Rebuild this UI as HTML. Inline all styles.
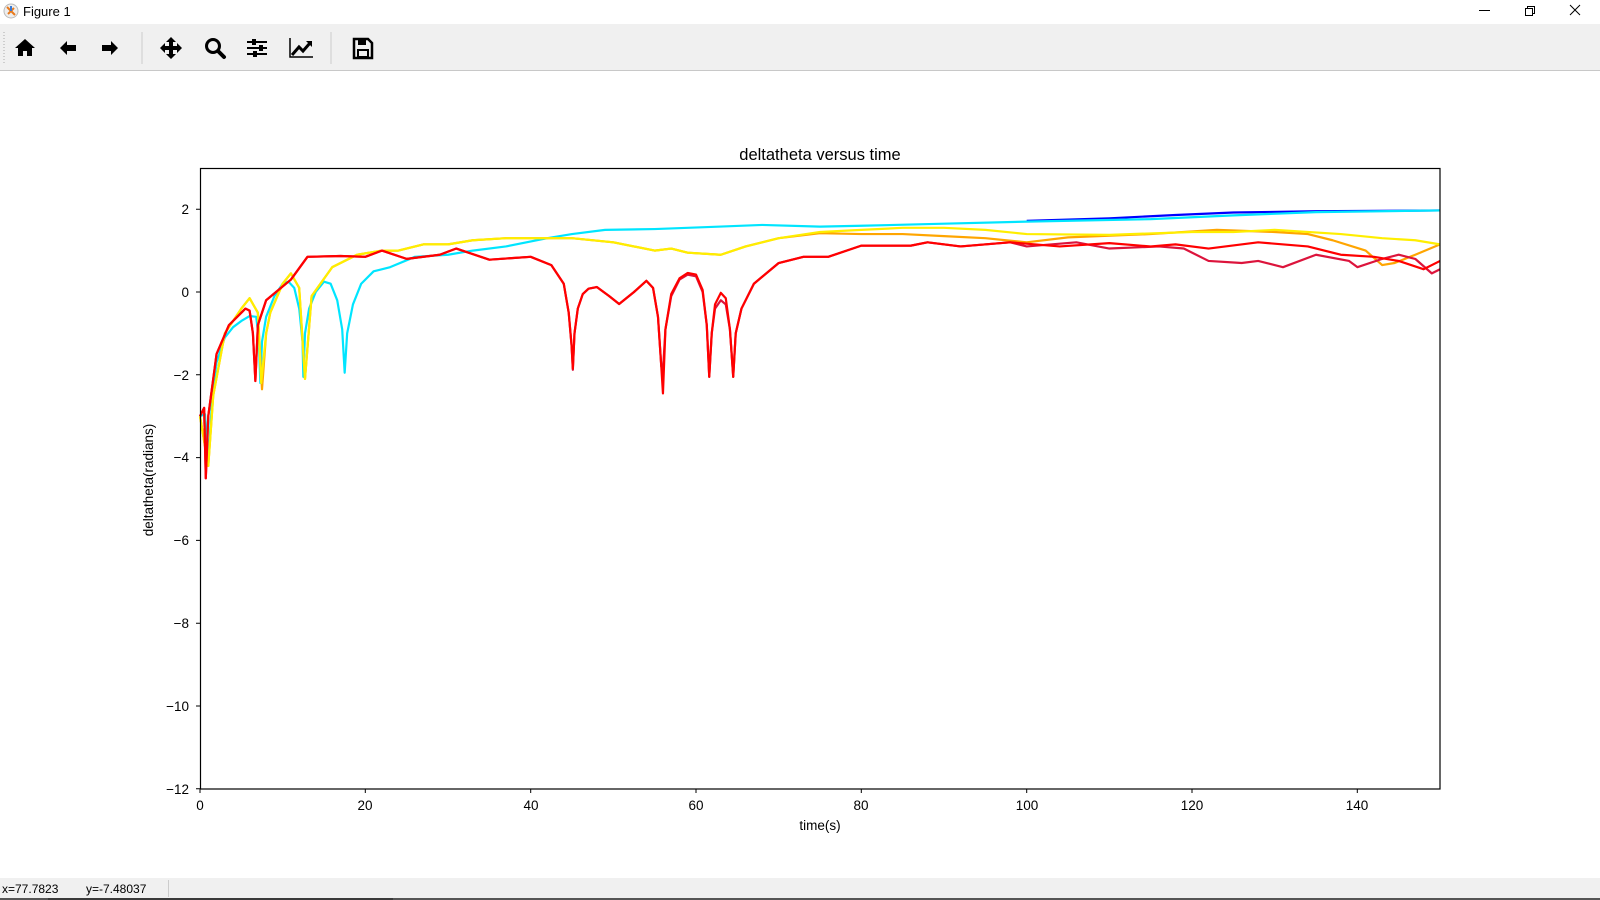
<!DOCTYPE html>
<html><head><meta charset="utf-8"><style>
body{margin:0;width:1600px;height:900px;overflow:hidden;background:#fff;font-family:"Liberation Sans","DejaVu Sans",sans-serif;position:relative}
.tb{position:absolute;left:0;top:24px;width:1600px;height:46px;background:#f0f0f0;border-bottom:1px solid #c8c8c8}
.sb{position:absolute;left:0;top:878px;width:1600px;height:20px;background:#f0f0f0;font-size:12px}
</style></head><body>
<div style="position:absolute;left:0;top:0;width:1600px;height:24px;background:#fff">
<svg width="16" height="16" style="position:absolute;left:3px;top:3px" viewBox="0 0 16 16"><circle cx="8" cy="8" r="7" fill="#eee" stroke="#bbb"/><path d="M4 4L12 12M5 11L11 5" stroke="#e87a1e" stroke-width="2"/><path d="M8 3V8" stroke="#3a7bd5" stroke-width="2"/></svg>
<div style="position:absolute;left:23px;top:4px;font-size:13px;color:#000">Figure 1</div>
<svg width="160" height="24" style="position:absolute;left:1440px;top:0" viewBox="0 0 160 24"><path d="M39 10.5H50" stroke="#000"/><rect x="85.5" y="8.5" width="7" height="7" fill="none" stroke="#000"/><path d="M87.5 8.5V6.5H94.5V13.5H92.5" fill="none" stroke="#000"/><path d="M130 5L140 15M140 5L130 15" stroke="#000"/></svg>
</div>
<div class="tb">
<svg width="420" height="46" viewBox="0 0 420 46" style="position:absolute;left:0;top:0">
<path d="M4 8V40" stroke="#aaa" stroke-dasharray="1 2"/>
<path d="M25 15L15 24H18V32H23V27H27V32H32V24H35Z" fill="#000"/>
<path d="M60 24L67 17V21H76V27H67V31Z" fill="#000"/>
<path d="M118 24L111 17V21H102V27H111V31Z" fill="#000"/>
<path d="M142 8V40" stroke="#ccc"/>
<path d="M171 13L176 18H173V22H177V19L182 24L177 29V26H173V30H176L171 35L166 30H169V26H165V29L160 24L165 19V22H169V18H166Z" fill="#000"/>
<circle cx="213" cy="22" r="6.5" fill="none" stroke="#000" stroke-width="3"/><path d="M218 27L224 33" stroke="#000" stroke-width="4" stroke-linecap="round"/>
<path d="M247 18H267M247 24H267M247 30H267" stroke="#000" stroke-width="2"/><rect x="252" y="15" width="4" height="6" fill="#000"/><rect x="259" y="21" width="4" height="6" fill="#000"/><rect x="253" y="27" width="4" height="6" fill="#000"/>
<path d="M290 14V33H313" stroke="#000" stroke-width="1.5" fill="none"/><path d="M292 31L299 23L303 27L310 19" stroke="#000" stroke-width="3" fill="none"/><path d="M306 17H312V23Z" fill="#000"/>
<path d="M331 8V40" stroke="#ccc"/>
<path d="M354 15H368L372 19V34H354Z" fill="none" stroke="#000" stroke-width="2.5"/><rect x="358" y="16" width="8" height="5" fill="#000"/><rect x="358" y="26" width="10" height="7" fill="none" stroke="#000" stroke-width="2"/>
</svg></div>

<svg width="1600" height="900" style="position:absolute;left:0;top:0" font-family="Liberation Sans, DejaVu Sans, sans-serif">
<text x="820" y="160" font-size="16.5" text-anchor="middle">deltatheta versus time</text>
<g font-size="13.5" text-anchor="end">
<text x="189" y="214">2</text><text x="189" y="297">0</text><text x="189" y="380">−2</text><text x="189" y="462">−4</text><text x="189" y="545">−6</text><text x="189" y="628">−8</text><text x="189" y="711">−10</text><text x="189" y="794">−12</text></g>
<g stroke="#000"><path d="M196 209.2H200M196 292H200M196 374.8H200M196 457.6H200M196 540.4H200M196 623.2H200M196 706H200M196 788.8H200M200 789V793M365.3 789V793M530.7 789V793M696 789V793M861.3 789V793M1026.7 789V793M1192 789V793M1357.3 789V793"/></g>
<g font-size="13.5" text-anchor="middle">
<text x="200" y="810">0</text><text x="365" y="810">20</text><text x="531" y="810">40</text><text x="696" y="810">60</text><text x="861" y="810">80</text><text x="1027" y="810">100</text><text x="1192" y="810">120</text><text x="1357" y="810">140</text></g>
<text x="820" y="830" font-size="13.5" text-anchor="middle">time(s)</text>
<text transform="translate(153,480) rotate(-90)" font-size="13.5" text-anchor="middle">deltatheta(radians)</text>
<g transform="translate(200,292) scale(8.267,-41.4)" fill="none" stroke-width="2.2" stroke-linejoin="round">
<polyline vector-effect="non-scaling-stroke" stroke="#0000ff" points="100,1.72 110,1.78 118,1.86 125,1.92 135,1.95 150,1.97"/>
<polyline vector-effect="non-scaling-stroke" stroke="#00e5ff" points="0,-3 0.6,-2.95 1,-4.1 1.5,-2.5 2,-1.7 3,-1.1 4,-0.85 5,-0.7 6,-0.58 6.8,-0.6 7.1,-1.1 7.3,-2.2 7.5,-1.2 8,-0.6 9,-0.1 10,0.2 10.7,0.25 11.4,0.1 12,-0.4 12.4,-1.2 12.5,-2.05 12.7,-1 13.2,-0.4 14,0 15,0.25 15.8,0.2 16.6,-0.2 17.2,-0.9 17.5,-1.95 17.8,-1 18.5,-0.3 19.5,0.2 21,0.5 23,0.6 26,0.85 30,0.9 33,1.0 37,1.1 42,1.3 45,1.4 49,1.5 55,1.52 63,1.58 68,1.62 75,1.58 80,1.6 90,1.65 100,1.7 115,1.76 125,1.85 135,1.93 150,1.97"/>
<polyline vector-effect="non-scaling-stroke" stroke="#ffa500" points="0,-3 1,-4.2 1.6,-2.5 3,-1.0 5,-0.4 6,-0.15 7,-0.5 7.5,-2.35 8,-1 8.5,-0.5 10,0.2 11,0.45 12,0.1 12.7,-2.1 13.5,-0.1 16,0.6 19,0.9 22,1.0 24,1.0 27,1.15 30,1.15 33,1.25 37,1.3 45,1.3 50,1.2 55,1.0 57,1.05 59,0.95 63,0.9 66,1.1 70,1.3 75,1.42 80,1.4 85,1.4 90,1.35 95,1.3 100,1.2 105,1.32 115,1.4 123,1.5 130,1.45 134,1.4 137,1.25 141,1.0 143,0.65 144.5,0.7 147,0.9 150,1.15"/>
<polyline vector-effect="non-scaling-stroke" stroke="#ffee00" points="0,-3 1,-4.2 1.6,-2.5 3,-1.0 5,-0.4 6,-0.15 7,-0.5 7.4,-2.2 8,-1 8.5,-0.5 10,0.2 11,0.45 12,0.1 12.7,-2.1 13.5,-0.1 16,0.6 19,0.9 22,1.0 24,1.0 27,1.15 30,1.15 33,1.25 37,1.3 45,1.3 50,1.2 55,1.0 57,1.05 59,0.95 63,0.9 66,1.1 70,1.3 75,1.45 80,1.5 85,1.55 90,1.55 95,1.5 100,1.4 110,1.38 120,1.45 125,1.45 130,1.5 138,1.4 143,1.3 147,1.25 150,1.15"/>
<polyline vector-effect="non-scaling-stroke" stroke="#dc143c" points="0,-3 0.5,-2.8 0.7,-4.5 1,-3 2,-1.5 3.5,-0.8 5.5,-0.4 6,-0.45 6.4,-1 6.7,-2.15 7,-0.8 8,-0.2 11,0.3 13,0.85 17,0.87 20,0.85 22,1.0 25,0.8 29,0.9 31,1.05 35,0.78 40,0.85 42.5,0.65 44,0.2 44.6,-0.5 44.95,-1.3 45.1,-1.88 45.3,-1.0 45.7,-0.4 46.3,-0.05 47,0.08 48,0.12 49.5,-0.1 50.7,-0.29 52.5,0 54,0.27 54.8,0.1 55.4,-0.6 55.8,-1.8 56,-1.9 56.3,-0.9 57,-0.1 58,0.3 59,0.42 60,0.38 60.8,0 61.3,-0.8 61.6,-2.05 61.9,-1 62.3,-0.4 63,-0.2 63.6,-0.3 64.1,-0.9 64.5,-2.05 64.8,-1 65.5,-0.4 67,0.2 70,0.7 73,0.85 76,0.85 80,1.12 86,1.12 88,1.2 92,1.1 98,1.2 100,1.1 106,1.2 110,1.05 116,1.1 119,1.05 122,0.75 126,0.7 128,0.75 131,0.6 135,0.9 139,0.75 140,0.6 143,0.8 145,0.9 147,0.8 149,0.45 150,0.55"/>
<polyline vector-effect="non-scaling-stroke" stroke="#ff0000" points="0,-3 0.5,-2.8 0.7,-4.5 1,-3 2,-1.5 3.5,-0.8 5.5,-0.4 6,-0.45 6.4,-1 6.7,-2.15 7,-0.8 8,-0.2 11,0.3 13,0.85 17,0.87 20,0.85 22,1.0 25,0.8 29,0.9 31,1.05 35,0.78 40,0.85 42.5,0.65 44,0.2 44.6,-0.5 44.95,-1.3 45.1,-1.85 45.3,-1.0 45.7,-0.4 46.3,-0.05 47,0.08 48,0.12 49.5,-0.1 50.7,-0.29 52.5,0 54,0.27 54.8,0.1 55.4,-0.6 55.8,-1.8 56,-2.45 56.3,-0.9 57,-0.05 58,0.33 59,0.46 60,0.42 60.8,0.05 61.3,-0.8 61.6,-2.05 61.9,-1 62.3,-0.3 63,-0.02 63.6,-0.15 64.1,-0.9 64.5,-2.05 64.8,-1 65.5,-0.4 67,0.2 70,0.7 73,0.85 76,0.85 80,1.12 86,1.12 88,1.2 92,1.1 98,1.2 104,1.1 110,1.18 115,1.1 118,1.15 122,1.05 128,1.2 134,1.1 138,0.9 142,0.85 145,0.75 148,0.55 150,0.75"/>
</g>
<rect x="200.5" y="168.5" width="1239.5" height="620.5" fill="none" stroke="#000" stroke-width="1.2"/>
</svg>

<div class="sb"><span style="position:absolute;left:2px;top:4px">x=77.7823</span><span style="position:absolute;left:86px;top:4px">y=-7.48037</span><div style="position:absolute;left:168px;top:2px;width:1px;height:17px;background:#ccc"></div></div>
<div style="position:absolute;left:0;top:898px;width:1600px;height:2px;background:#555"></div>
<div style="position:absolute;left:48px;top:898px;width:345px;height:2px;background:#3a3a3a"></div>
</body></html>
